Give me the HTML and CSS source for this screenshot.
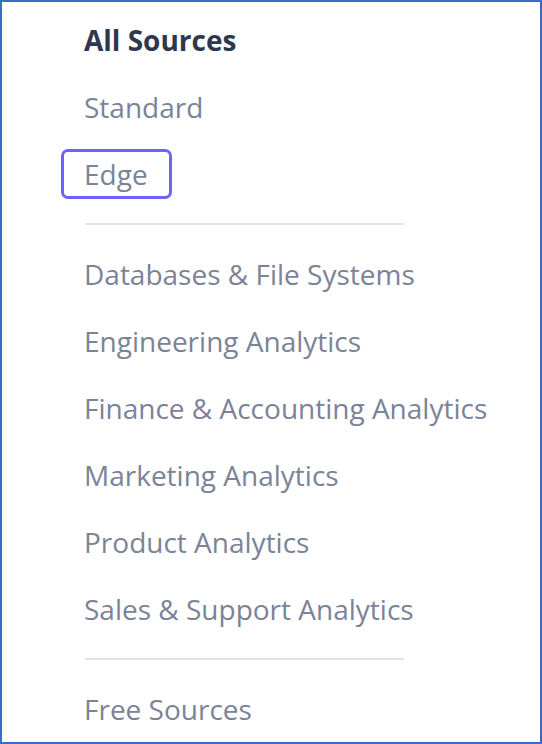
FILE: index.html
```html
<!DOCTYPE html>
<html lang="en">
<head>
<meta charset="utf-8">
<title>Sources</title>
<link rel="stylesheet" href="styles.css">
</head>
<body>
<div class="frame">
  <nav class="menu">
    <ul class="group">
      <li><a class="item active" href="#">All Sources</a></li>
      <li><a class="item" href="#">Standard</a></li>
      <li><a class="item focused" href="#">Edge</a></li>
    </ul>
    <hr class="divider">
    <ul class="group">
      <li><a class="item" href="#">Databases &amp; File Systems</a></li>
      <li><a class="item" href="#">Engineering Analytics</a></li>
      <li><a class="item" href="#">Finance &amp; Accounting Analytics</a></li>
      <li><a class="item" href="#">Marketing Analytics</a></li>
      <li><a class="item" href="#">Product Analytics</a></li>
      <li><a class="item" href="#">Sales &amp; Support Analytics</a></li>
    </ul>
    <hr class="divider">
    <ul class="group">
      <li><a class="item" href="#">Free Sources</a></li>
    </ul>
  </nav>
</div>
</body>
</html>
```
FILE: styles.css
```css
* { box-sizing: border-box; }
html, body { margin: 0; padding: 0; background: #ffffff; }
.frame {
  width: 542px;
  height: 744px;
  border: 2px solid #3b6cc9;
  overflow: hidden;
  font-family: "Open Sans", "Noto Sans", sans-serif;
}
.menu {
  padding: 13px 0 0 82px;
}
.group {
  list-style: none;
  margin: 0;
  padding: 0;
  display: flex;
  flex-direction: column;
  gap: 17px;
}
.item {
  display: inline-block;
  height: 50px;
  line-height: 50px;
  padding: 0 24px 0 23px;
  margin-left: -23px;
  font-size: 28px;
  color: #7b8397;
  text-decoration: none;
  border-radius: 7px;
  white-space: nowrap;
}
.item.active {
  font-weight: 700;
  color: #2e384c;
}
.item.focused {
  box-shadow: inset 0 0 0 3px #6c63f7;
}
.divider {
  width: 319px;
  height: 2px;
  border: 0;
  margin: 24px 0 24px 1px;
  background: #e1e4e9;
}
```
